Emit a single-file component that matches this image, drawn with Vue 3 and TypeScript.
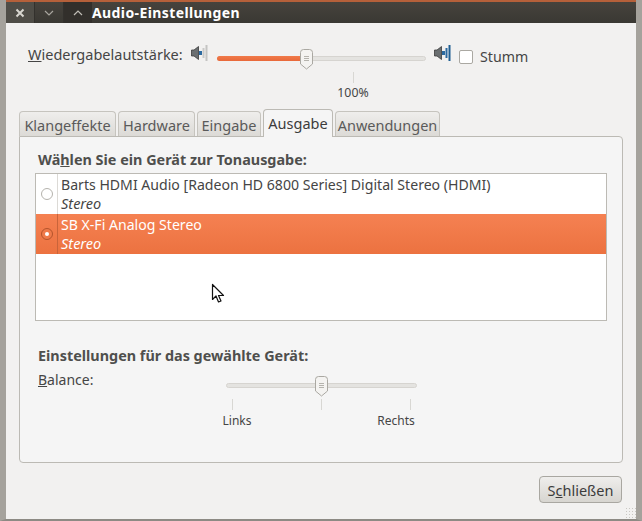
<script setup lang="ts">
const tabs = [
  { label: 'Klangeffekte', width: 97 },
  { label: 'Hardware', width: 77 },
  { label: 'Eingabe', width: 64 },
  { label: 'Ausgabe', width: 70, active: true },
  { label: 'Anwendungen', width: 105 },
]
const devices = [
  { name: 'Barts HDMI Audio [Radeon HD 6800 Series] Digital Stereo (HDMI)', profile: 'Stereo', selected: false },
  { name: 'SB X-Fi Analog Stereo', profile: 'Stereo', selected: true },
]
</script>

<template>
  <div class="window">
    <header class="titlebar">
      <div class="controls">
        <span class="ctl ctl-close">
          <svg width="10" height="10" viewBox="0 0 10 10"><path d="M1.500 1.500l7 7M8.500 1.500l-7 7" stroke="#d8d6d0" stroke-width="2" fill="none" /></svg>
        </span>
        <span class="ctl">
          <svg width="10" height="6" viewBox="0 0 10 6"><path d="M1 1l4 4 4-4" stroke="#a8a59e" stroke-width="1.200" fill="none" /></svg>
        </span>
        <span class="ctl ctl-max">
          <svg width="10" height="6" viewBox="0 0 10 6"><path d="M1 5l4-4 4 4" stroke="#c0bdb6" stroke-width="1.200" fill="none" /></svg>
        </span>
      </div>
      <span class="title">Audio-Einstellungen</span>
    </header>

    <div class="content">
      <div class="volume-row">
        <span class="volume-label"><u>W</u>iedergabelautstärke:</span>
        <svg class="speaker" width="17" height="16" viewBox="0 0 17 16">
          <path d="M.5 5h2.500l4.500-3.500v13L3 11H.5z" fill="#6a6e70" stroke="#3a3a3a" stroke-width=".8" />
          <rect x="8" y="6" width="3" height="4" fill="#2c6aa0" />
          <rect x="11.500" y="3" width="2" height="10" fill="#c9c9c7" />
          <rect x="14.500" y="0" width="2" height="16" fill="#c4c4c2" />
        </svg>
        <div class="vol-col">
          <div class="slider">
            <div class="trough"></div>
            <div class="fill"></div>
            <svg class="thumb thumb-vol" width="13" height="21" viewBox="0 0 13 21">
              <path d="M.5 3.500a3 3 0 0 1 3-3h6a3 3 0 0 1 3 3v11.500l-6 5-6-5z" fill="#f4f3f1" stroke="#aaa8a2" />
              <path d="M4 7.500h5M4 9.500h5M4 11.500h5" stroke="#b5b3ad" />
            </svg>
          </div>
          <div class="mark vol-mark">
            <i class="tick"></i>
            <span>100%</span>
          </div>
        </div>
        <svg class="speaker speaker-hi" width="17" height="16" viewBox="0 0 17 16">
          <path d="M.5 5h2.500l4.500-3.500v13L3 11H.5z" fill="#6a6e70" stroke="#3a3a3a" stroke-width=".8" />
          <rect x="8" y="6" width="3" height="4" fill="#2c6aa0" />
          <rect x="11.500" y="3" width="2" height="10" fill="#2c6aa0" />
          <rect x="14.500" y="0" width="2" height="16" fill="#1f5f92" />
        </svg>
        <span class="check"></span>
        <span class="mute">Stumm</span>
      </div>

      <nav class="tabs">
        <div
          v-for="t in tabs"
          :key="t.label"
          class="tab"
          :class="{ active: t.active }"
          :style="{ width: t.width + 'px' }"
        >{{ t.label }}</div>
      </nav>

      <section class="panel">
        <h3 class="heading first">Wä<u>h</u>len Sie ein Gerät zur Tonausgabe:</h3>
        <div class="list">
          <div v-for="d in devices" :key="d.name" class="row" :class="{ selected: d.selected }">
            <div class="radio-cell"><span class="radio"></span></div>
            <div class="row-text">
              <div>{{ d.name }}</div>
              <div class="profile">{{ d.profile }}</div>
            </div>
          </div>
        </div>

        <h3 class="heading second">Einstellungen für das gewählte Gerät:</h3>
        <div class="balance">
          <span class="balance-label"><u>B</u>alance:</span>
          <div class="bal-col">
            <div class="slider bal-slider">
              <div class="trough"></div>
              <svg class="thumb thumb-bal" width="13" height="21" viewBox="0 0 13 21">
                <path d="M.5 3.500a3 3 0 0 1 3-3h6a3 3 0 0 1 3 3v11.500l-6 5-6-5z" fill="#f4f3f1" stroke="#aaa8a2" />
                <path d="M4 7.500h5M4 9.500h5M4 11.500h5" stroke="#b5b3ad" />
              </svg>
            </div>
            <div class="bal-marks">
              <div class="mark"><i class="tick"></i><span class="lbl-left">Links</span></div>
              <div class="mark"><i class="tick"></i></div>
              <div class="mark"><i class="tick"></i><span class="lbl-right">Rechts</span></div>
            </div>
          </div>
        </div>
      </section>

      <footer class="actions">
        <button class="close-btn">S<u>c</u>hließen</button>
      </footer>
    </div>

    <svg class="cursor" width="14" height="21" viewBox="0 0 14 21">
      <path d="M1.500 1.500v15l3.500-3.500 2.500 6 2.500-1-2.500-5.500h5z" fill="#fff" stroke="#111" stroke-width="1.200" stroke-linejoin="round" />
    </svg>
    <span class="grip"></span>
  </div>
</template>

<style>
html, body { margin: 0; padding: 0; background: #f2f1f0; }
</style>

<style scoped>
.window {
  position: relative;
  box-sizing: border-box;
  width: 642px;
  height: 521px;
  display: flex;
  flex-direction: column;
  overflow: hidden;
  background: #f2f1f0;
  border-left: 6px solid #a5a29c;
  border-right: 6px solid #a5a29c;
  border-bottom: 2px solid #8d8a84;
  font-family: "Noto Sans", "Open Sans", sans-serif;
  font-size: 14.500px;
  color: #454545;
}
.titlebar {
  flex: none;
  box-sizing: border-box;
  height: 23px;
  display: flex;
  align-items: center;
  background: linear-gradient(#46433d, #3a3833);
  border-top: 2px solid #b5603a;
}
.controls { display: flex; width: 86px; height: 21px; }
.ctl {
  width: 28px;
  display: flex;
  align-items: center;
  justify-content: center;
  border-right: 1px solid #33312d;
}
.ctl-close { background: #4f4d47; }
.ctl-max { background: #322f2b; border-right: none; }
.title {
  font-weight: 700;
  font-size: 14px;
  letter-spacing: .4px;
  color: #fff;
}
.content {
  flex: 1;
  display: flex;
  flex-direction: column;
  padding: 0 13px;
  min-height: 0;
}
.volume-row {
  height: 87px;
  display: flex;
  align-items: flex-start;
  padding-left: 9px;
}
.volume-label { margin-top: 21px; width: 155px; line-height: 20px; white-space: nowrap; }
.speaker { flex: none; margin: 22px 0 0 8px; }
.vol-col { width: 209px; margin: 26px 0 0 9px; flex: none; }
.slider { position: relative; height: 20px; }
.trough {
  box-sizing: border-box;
  height: 5px;
  position: relative;
  top: 7px;
  border-radius: 3px;
  background: #e4e3e0;
  border: 1px solid #d6d4d0;
}
.fill {
  position: absolute;
  left: 0;
  top: 7px;
  width: 84px;
  height: 5px;
  border-radius: 3px 0 0 3px;
  background: linear-gradient(#f07a4a, #e9693a);
}
.thumb { position: absolute; top: 0; }
.thumb-vol { left: 83px; }
.thumb-bal { left: 89px; }
.mark {
  display: flex;
  flex-direction: column;
  align-items: center;
  font-size: 12px;
  line-height: 16px;
}
.tick { display: block; width: 1px; height: 11px; background: #d8d7d3; }
.vol-mark { margin-top: 3px; padding-left: 63px; }
.vol-mark span { margin-top: 2px; font-size: 12.300px; }
.check {
  flex: none;
  width: 12px;
  height: 12px;
  margin: 27px 0 0 8px;
  border: 1px solid #aaa8a2;
  border-radius: 2px;
  background: #fff;
}
.mute { margin: 24px 0 0 7px; line-height: 20px; font-size: 14.200px; }

.tabs { display: flex; gap: 2px; height: 26px; position: relative; z-index: 1; }
.tab {
  box-sizing: border-box;
  height: 25px;
  margin-top: 1px;
  text-align: center;
  line-height: 26px;
  color: #5a5a5a;
  white-space: nowrap;
  background: linear-gradient(#efeeec, #dcdad6);
  border: 1px solid #c6c4be;
  border-bottom: none;
  border-radius: 4px 4px 0 0;
}
.tab.active {
  height: 28px;
  margin-top: -1px;
  line-height: 26px;
  color: #3c3c3c;
  background: #f5f5f5;
  border-color: #bcbab4;
}
.panel {
  box-sizing: border-box;
  height: 327px;
  flex: none;
  background: #f5f5f5;
  border: 1px solid #bcbab4;
  border-radius: 0 4px 4px 4px;
  padding: 0 15px;
}
.heading { margin: 0; font-size: 14.400px; font-weight: 700; color: #4f4f4d; }
.heading.first { margin: 13px 0 0 3px; line-height: 19px; }
.heading.second { margin: 25px 0 0 3px; line-height: 19px; }
.list {
  box-sizing: border-box;
  width: 572px;
  height: 148px;
  margin-top: 4px;
  background: #fff;
  border: 1px solid #bcbab4;
}
.row { display: flex; height: 40px; }
.radio-cell {
  flex: none;
  width: 21px;
  display: flex;
  align-items: center;
  justify-content: center;
  border-right: 1px solid #dcdad6;
}
.radio {
  box-sizing: border-box;
  width: 12px;
  height: 12px;
  border-radius: 50%;
  border: 1px solid #b5b3ad;
  background: #fff;
  position: relative;
}
.row-text { padding: 2px 0 0 3px; line-height: 18px; font-size: 14.100px; }
.profile { font-style: italic; font-size: 14.500px; }
.row.selected {
  background: linear-gradient(#f58152, #ec7240);
  color: #fff;
}
.row.selected .radio-cell { border-right-color: #c9643a; }
.row.selected .radio { border-color: #b5542c; background: #ef7a4a; }
.row.selected .radio::after {
  content: "";
  position: absolute;
  left: 3px;
  top: 3px;
  width: 4px;
  height: 4px;
  border-radius: 50%;
  background: #fff;
}
.balance { display: flex; padding-left: 3px; margin-top: 5px; }
.balance-label { width: 188px; line-height: 20px; font-size: 14px; }
.bal-col { width: 191px; }
.bal-slider { margin-top: 6px; }
.bal-marks {
  display: flex;
  justify-content: space-between;
  margin: 3px -13px 0 -14px;
}
.bal-marks .mark { width: 40px; }
.bal-marks span { margin-top: 3px; }
.lbl-left { margin-left: 10px; }
.lbl-right { margin-right: 28px; }
.actions { display: flex; justify-content: flex-end; padding-top: 13px; }
.close-btn {
  box-sizing: border-box;
  width: 83px;
  height: 27px;
  margin-right: 1px;
  font: inherit;
  color: #3c3c3c;
  background: linear-gradient(#efeeec, #d7d5d0);
  border: 1px solid #a9a7a1;
  border-radius: 4px;
  padding: 0;
}
.cursor { position: absolute; left: 205px; top: 283px; }
.grip {
  position: absolute;
  right: 0;
  bottom: 0;
  width: 11px;
  height: 12px;
  background-image: radial-gradient(circle, #c9c7c2 1px, transparent 1px);
  background-size: 3px 3px;
}
</style>
